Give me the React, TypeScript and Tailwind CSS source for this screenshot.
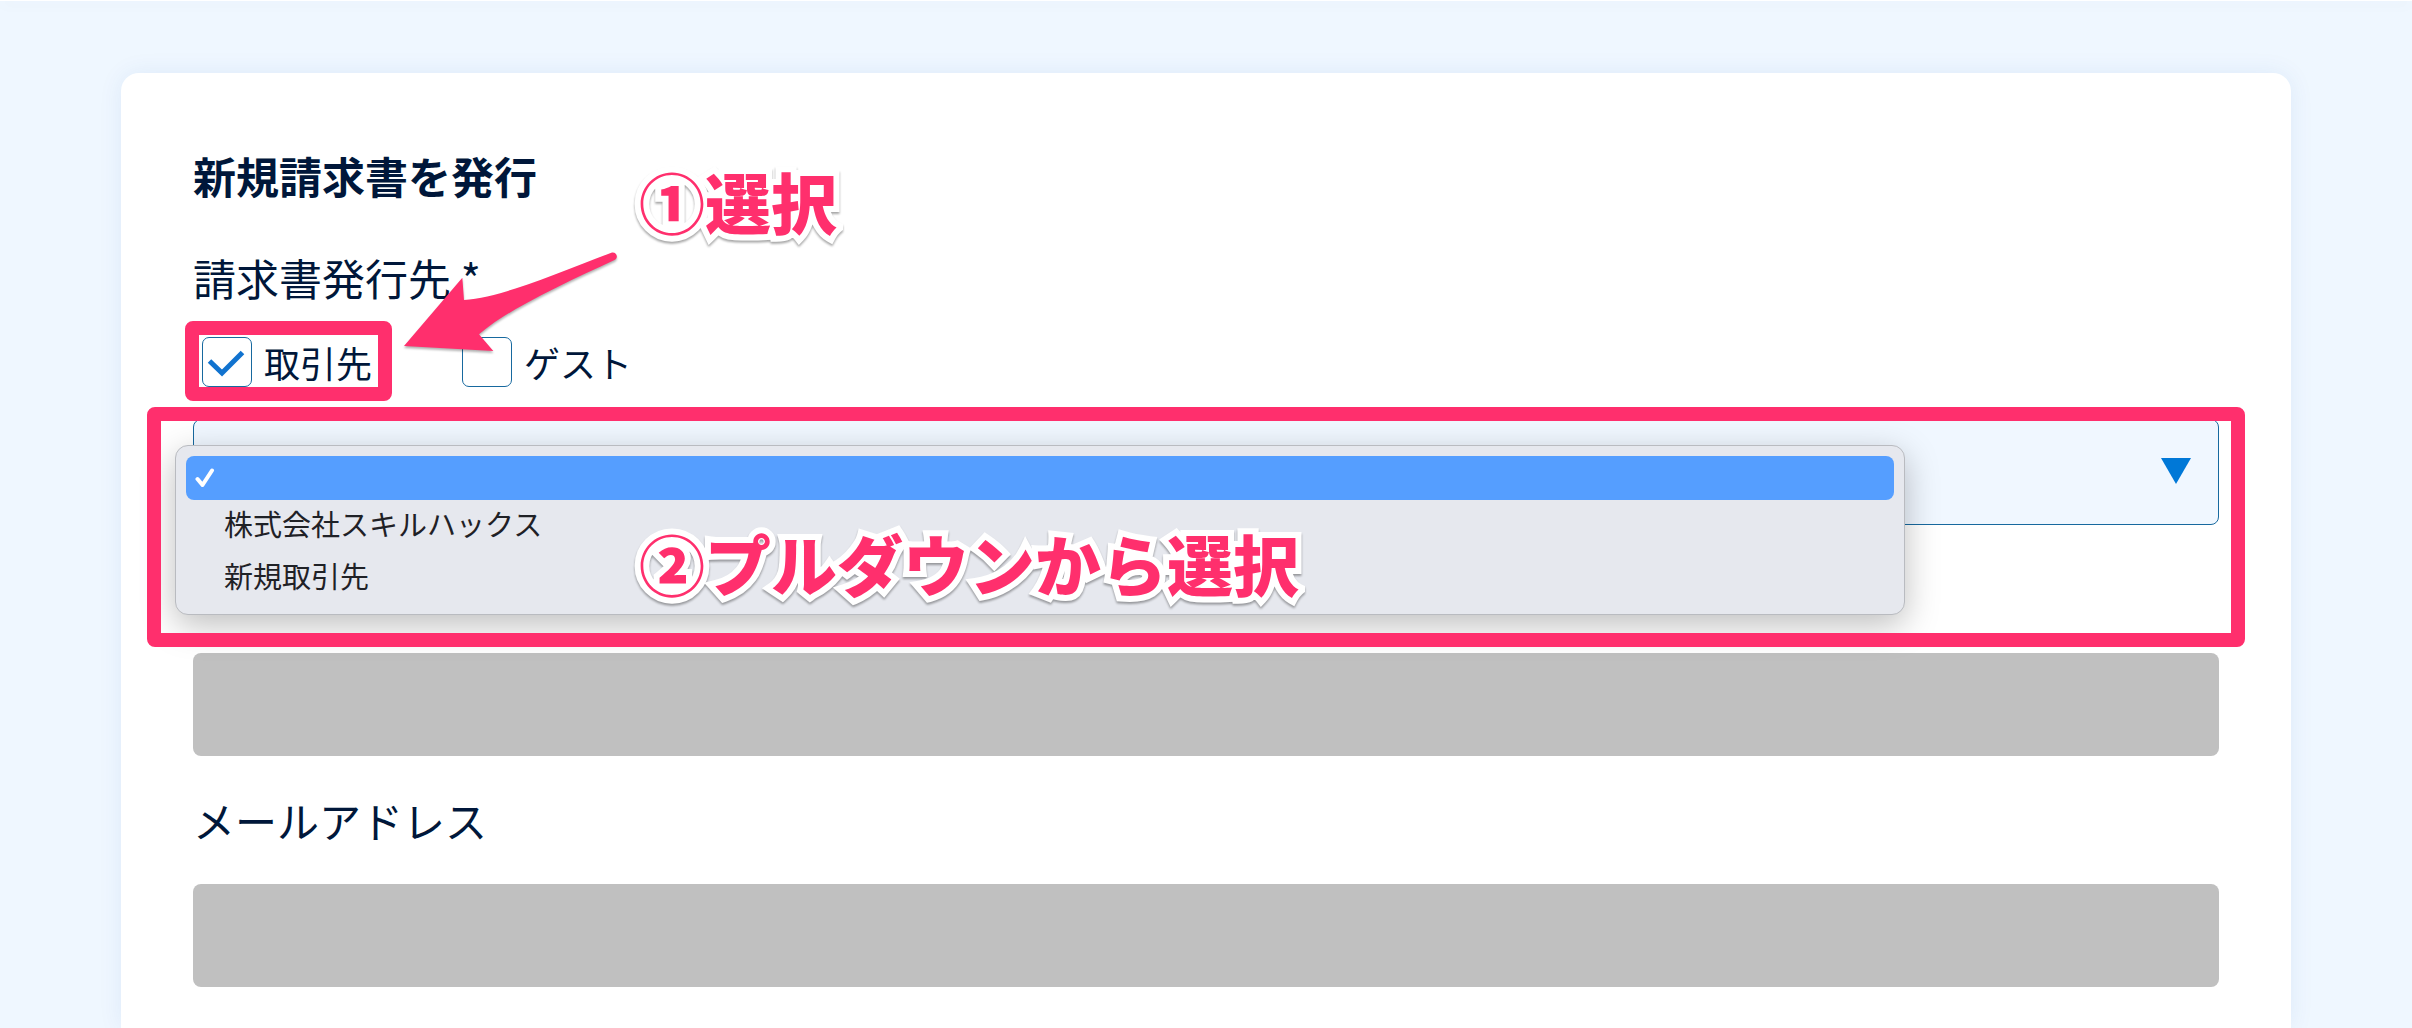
import { useState } from 'react';

const clients = ['株式会社スキルハックス', '新規取引先'];

const noteClass =
  'absolute z-40 whitespace-nowrap text-[66px] leading-[80px] font-black text-[#ff2f6d] [paint-order:stroke_fill] [-webkit-text-stroke:12px_white] drop-shadow-[0_2px_1px_rgba(0,0,0,0.35)] pointer-events-none';

function CheckOption({ id, label, checked, onChange }: { id: string; label: string; checked: boolean; onChange: () => void }) {
  return (
    <div className="flex items-center gap-3">
      <span className="relative block size-[50px]">
        <input
          id={id}
          type="checkbox"
          checked={checked}
          onChange={onChange}
          className="block size-[50px] appearance-none rounded-[7px] border border-[#17699f] bg-white"
        />
        {checked && (
          <svg viewBox="0 0 50 50" className="pointer-events-none absolute inset-0 size-full" fill="none" stroke="#1173cf" strokeWidth="5">
            <path d="M7.5 24 L20 36 L40.5 15.5" />
          </svg>
        )}
      </span>
      <label htmlFor={id} className="text-[36px] leading-[50px]">{label}</label>
    </div>
  );
}

function Arrow() {
  return (
    <svg viewBox="780 90 660 330" className="pointer-events-none absolute -top-[88px] left-[198px] z-40 h-[110px] w-[220px] drop-shadow-[0_2px_1px_rgba(0,0,0,0.3)]">
      <path
        d="M792 381 L967 176 L972 243 C1080 237 1230 170 1414 101 C1428 97 1437 114 1425 122 C1270 194 1105 270 1017 346 L1060 396 Z"
        fill="#ff2f6d"
      />
    </svg>
  );
}

export default function App() {
  const [target, setTarget] = useState('client');
  const [client, setClient] = useState('');

  return (
    <div className="flex min-h-screen flex-col bg-[#eff7ff] font-['Noto_Sans_CJK_JP',sans-serif] text-[#00173a]">
      <header className="h-px bg-white shadow-[0_2px_14px_rgba(0,60,100,0.16)]" />
      <main className="mx-[121px] mt-18 flex-1 rounded-t-[18px] bg-white px-18 pt-18 pb-10 shadow-[0_0_24px_rgba(0,80,180,0.08)]">
        <form>
          <div className="relative">
            <h1 className="text-[43px] leading-[60px] font-bold">新規請求書を発行</h1>
            <p className={`${noteClass} top-[15px] left-[446px]`}>①選択</p>
          </div>

          <fieldset className="mt-10">
            <legend className="text-[43px] leading-[64px]">請求書発行先 *</legend>
            <div className="relative mt-7 ml-[9px] flex gap-[90px]">
              <div className="relative">
                <CheckOption id="target-client" label="取引先" checked={target === 'client'} onChange={() => setTarget('client')} />
                <div className="pointer-events-none absolute -top-4 -right-5 -bottom-[14px] -left-[17px] z-30 rounded-lg border-[14px] border-[#ff2f6d]" />
              </div>
              <CheckOption id="target-guest" label="ゲスト" checked={target === 'guest'} onChange={() => setTarget('guest')} />
              <Arrow />
            </div>
          </fieldset>

          <div className="relative mt-8">
            <select
              aria-label="請求書発行先"
              value={client}
              onChange={e => setClient(e.target.value)}
              className="block h-[106px] w-full appearance-none rounded-lg border border-[#17699f] bg-[#f0f7ff] px-8 text-[36px]"
            >
              <option value="" />
              {clients.map(c => <option key={c} value={c}>{c}</option>)}
            </select>
            <svg viewBox="0 0 30 26" className="pointer-events-none absolute top-[39px] right-7 h-[26px] w-[30px]" fill="#0078d7">
              <path d="M0 0 H30 L15 26 Z" />
            </svg>

            <ul role="listbox" className="absolute top-[26px] -left-[18px] right-[314px] z-20 h-[170px] rounded-[13px] border border-[#b9bbc0] bg-[#e6e8ee] p-[10px] text-[29px] leading-[46px] text-[#1f2126] shadow-[0_10px_34px_rgba(0,0,0,0.26)]">
              <li role="option" aria-selected="true" className="flex h-11 items-center rounded-lg bg-[#559eff] pl-[9px]">
                <svg viewBox="0 0 20 20" className="size-5" fill="none" stroke="white" strokeWidth="4" strokeLinecap="round" strokeLinejoin="round">
                  <path d="M2.5 11 L7.5 17 L17 2.5" />
                </svg>
              </li>
              {clients.map(c => (
                <li key={c} role="option" aria-selected="false" className="mb-[6px] pl-[38px]">{c}</li>
              ))}
            </ul>

            <div className="pointer-events-none absolute -top-3 -right-[26px] -left-[46px] z-30 h-[240px] rounded-lg border-[14px] border-[#ff2f6d]" />
            <p className={`${noteClass} top-[103px] left-[446px]`}>②プルダウンから選択</p>
          </div>

          <input type="text" disabled aria-label="取引先名" className="mt-32 block h-[103px] w-full rounded-lg bg-[#c0c0c0]" />

          <label htmlFor="email" className="my-8 block text-[42px] leading-[64px]">メールアドレス</label>
          <input id="email" type="email" disabled className="block h-[103px] w-full rounded-lg bg-[#c0c0c0]" />
        </form>
      </main>
    </div>
  );
}
